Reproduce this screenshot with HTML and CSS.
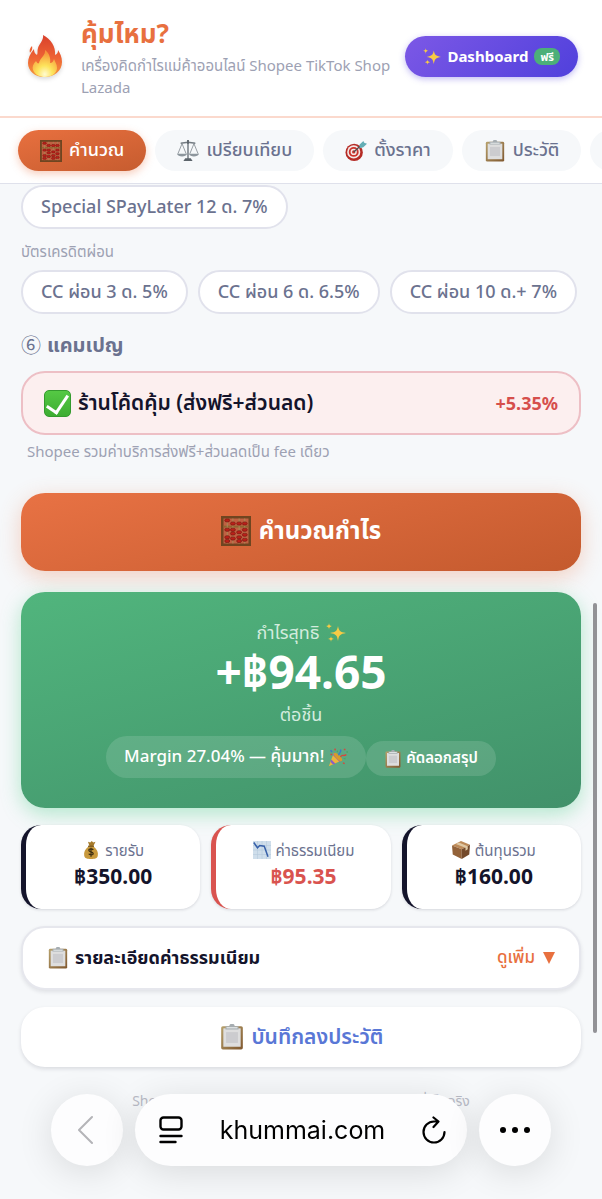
FILE: index.html
```html
<!DOCTYPE html>
<html lang="th">
<head>
    <meta charset="UTF-8">
    <meta name="viewport" content="width=device-width, initial-scale=1.0">
    <title>คุ้มไหม?</title>
    <link rel="stylesheet" href="styles.css">
</head>
<body>
    <!-- Shared icons -->
    <svg class="sprite" aria-hidden="true">
        <defs>
            <linearGradient id="flameOuter" x1="0" y1="0" x2="0" y2="1">
                <stop offset="0" stop-color="#d9402b"/>
                <stop offset=".55" stop-color="#ee6335"/>
                <stop offset="1" stop-color="#f59a3c"/>
            </linearGradient>
            <radialGradient id="flameInner" cx=".5" cy=".9" r=".8">
                <stop offset="0" stop-color="#fffbd0"/>
                <stop offset=".4" stop-color="#fde45c"/>
                <stop offset="1" stop-color="#f6953a"/>
            </radialGradient>
            <linearGradient id="board" x1="0" y1="0" x2="1" y2="1">
                <stop offset="0" stop-color="#b7a16c"/>
                <stop offset="1" stop-color="#80582f"/>
            </linearGradient>
        </defs>
        <symbol id="fire" viewBox="0 0 34 42">
            <path fill="url(#flameOuter)" d="M15 0c1 5-4 9-5 13-1 3 0 5-1 7-2-1-3-3-3-6-4 5-6 9-6 14 0 8 7 14 16 14 10 0 18-6 18-15 0-5-2-9-4-12 0 3-1 4-3 5 1-8-4-16-12-20z"/>
            <path fill="#ee6335" d="M4 11c-2 2-3 4-2 7 1-2 3-3 2-7z"/>
            <path fill="url(#flameInner)" d="M17 15c1 5-5 8-6 13-1 1-2 0-3-2-3 3-4 6-3 9 2 5 7 7 12 7 7 0 12-4 12-9 0-4-2-6-3-9-1 3-2 4-4 4 1-5-1-10-5-13z"/>
        </symbol>
        <symbol id="sparkles" viewBox="0 0 20 20">
            <path fill="#f8cb45" d="M12 4c1 5 2 6 8 7-6 1-7 2-8 8-1-6-2-7-8-8 6-1 7-2 8-7zM3 1c0 2 1 3 3 3-2 1-3 1-3 4 0-3-1-3-3-4 2 0 3-1 3-3zM5 14c0 2 1 2 3 3-2 0-3 1-3 3 0-2-1-3-3-3 2-1 3-1 3-3z"/>
        </symbol>
        <symbol id="abacus" viewBox="0 0 24 24">
            <rect x="1" y="1" width="22" height="22" fill="#c06042" stroke="#6f4520" stroke-width="2"/>
            <path stroke="#8f6630" stroke-width="1.500" d="M2 8.500h20"/>
            <path stroke="#a88955" stroke-width=".8" d="M5 2v20M9.500 2v20M14.500 2v20M19 2v20"/>
            <g fill="#ba1f19" stroke="#72150f" stroke-width=".5">
                <ellipse cx="5" cy="3.500" rx="2" ry="1.300"/><ellipse cx="9.500" cy="6" rx="2" ry="1.300"/><ellipse cx="14.500" cy="6" rx="2" ry="1.300"/><ellipse cx="19" cy="6" rx="2" ry="1.300"/>
                <ellipse cx="5" cy="11" rx="2" ry="1.300"/><ellipse cx="9.500" cy="11" rx="2" ry="1.300"/><ellipse cx="14.500" cy="13" rx="2" ry="1.300"/><ellipse cx="19" cy="11" rx="2" ry="1.300"/>
                <ellipse cx="5" cy="17" rx="2" ry="1.300"/><ellipse cx="9.500" cy="14" rx="2" ry="1.300"/><ellipse cx="14.500" cy="17" rx="2" ry="1.300"/><ellipse cx="19" cy="15" rx="2" ry="1.300"/>
                <ellipse cx="5" cy="20" rx="2" ry="1.300"/><ellipse cx="9.500" cy="18" rx="2" ry="1.300"/><ellipse cx="14.500" cy="20" rx="2" ry="1.300"/><ellipse cx="19" cy="19" rx="2" ry="1.300"/>
            </g>
        </symbol>
        <symbol id="scales" viewBox="0 0 24 24">
            <g fill="none" stroke="#737b82" stroke-width=".8">
                <path d="M5.500 4L1 15M5.500 4L10 15M18.500 4L14 15M18.500 4L23 15"/>
                <path stroke-width="1.600" d="M4 3.500c3 0 5-1 8-1s5 1 8 1M12 2v19"/>
            </g>
            <path fill="#8d969d" d="M0 15h11c-1 4-10 4-11 0zM13 15h11c-1 4-10 4-11 0z"/>
            <path fill="#5c646b" d="M9 20h6l2 3H7zM11 0h2v4h-2z"/>
        </symbol>
        <symbol id="target" viewBox="0 0 24 24">
            <circle cx="10" cy="13.500" r="9.500" fill="#b52b25"/>
            <circle cx="9.500" cy="13" r="7.200" fill="#f4e8e6"/>
            <circle cx="9.500" cy="13" r="5.400" fill="#cc342c"/>
            <circle cx="9.500" cy="13" r="3.400" fill="#f4e8e6"/>
            <circle cx="9.500" cy="13" r="1.800" fill="#cc342c"/>
            <path stroke="#4d4d52" stroke-width="1.400" d="M9.500 13l9-8"/>
            <path fill="#63aeb5" d="M16 5l4-4 1 2 3 1-4 4-4 1z"/>
        </symbol>
        <symbol id="clipboard" viewBox="0 0 24 24">
            <rect x="2" y="2" width="20" height="21.500" rx="1.500" fill="url(#board)"/>
            <rect x="4" y="4" width="16" height="17" fill="#dedede"/>
            <rect x="6.500" y="7.500" width="11" height="10" fill="#cccccf"/>
            <path fill="#a6adb1" d="M6 2h3.500c0-3 5-3 5 0H18v3H6z"/>
            <path fill="#edf0f1" d="M7 3h10v1H7z"/>
        </symbol>
        <symbol id="party" viewBox="0 0 24 24">
            <path fill="#edb53b" d="M7 7L1 23l16-7z"/>
            <path fill="#8e5fc1" d="M7 7l-1 3 8 8 3-2zM4 15l-1 3 3 3 3-1z"/>
            <ellipse cx="12" cy="12" rx="2.500" ry="6.500" fill="#d79a2c" transform="rotate(-45 12 12)"/>
            <path fill="none" stroke="#3979cc" stroke-width="1.800" d="M13 10c-1-3 4-3 2-7M3 4l2 2"/>
            <path fill="none" stroke="#d5473e" stroke-width="1.600" d="M15 12c2-4 4 0 7-3M8 2l1 2M18 19l2 1"/>
            <path fill="#d5473e" d="M19 2h2v2h-2zM3 8h2v2H3z"/>
            <path fill="#48a567" d="M18 14l3-1v2zM10 5l2-1v3zM22 5h2v2h-2z"/>
        </symbol>
        <symbol id="money" viewBox="0 0 20 24">
            <path fill="#a67a2a" d="M6 1l3 1 2-2 2 2 3-1-3 6H8z"/>
            <path fill="#c8993c" d="M7 7h6c5 4 7 8 6 13-1 3-3 4-9 4s-8-1-9-4C0 15 2 11 7 7z"/>
            <path stroke="#765319" stroke-width="1.600" d="M6 7h8"/>
            <path fill="none" stroke="#3b2d12" stroke-width="1.600" d="M13 12c-1-2-6-2-6 0 0 3 6 2 6 5 0 2-5 2-6 0M10 9v12"/>
        </symbol>
        <symbol id="chart" viewBox="0 0 24 24">
            <rect width="24" height="24" fill="#cfdeeb"/>
            <path fill="none" stroke="#b3c8db" stroke-width=".7" d="M6 0v24M12 0v24M18 0v24M0 6h24M0 12h24M0 18h24"/>
            <path fill="none" stroke="#3760a9" stroke-width="2" d="M1 2l5 7 3-3 6 1 5 14"/>
        </symbol>
        <symbol id="box" viewBox="0 0 24 24">
            <path fill="#bd8a58" d="M0 6l12-6 12 5-11 6z"/>
            <path fill="#936239" d="M0 6l13 5v13L1 18z"/>
            <path fill="#744a2b" d="M24 5l-11 6v13l10-6z"/>
            <path fill="#e0c9a5" d="M5 4l4-2 12 5v4l-3 2V9z"/>
        </symbol>
    </svg>

    <header>
        <svg class="logo"><use href="#fire"/></svg>
        <div class="brand">
            <h1>คุ้มไหม?</h1>
            <p>เครื่องคิดกำไรแม่ค้าออนไลน์ Shopee TikTok Shop Lazada</p>
        </div>
        <a href="#dashboard" class="dashboard-button">
            <svg class="icon-tiny"><use href="#sparkles"/></svg>
            Dashboard
            <span class="free">ฟรี</span>
        </a>
    </header>

    <nav>
        <button class="tab active"><svg class="icon"><use href="#abacus"/></svg>คำนวณ</button>
        <button class="tab"><svg class="icon"><use href="#scales"/></svg>เปรียบเทียบ</button>
        <button class="tab"><svg class="icon"><use href="#target"/></svg>ตั้งราคา</button>
        <button class="tab"><svg class="icon"><use href="#clipboard"/></svg>ประวัติ</button>
        <button class="tab" aria-label="สรุป"><svg class="icon"><use href="#chart"/></svg></button>
    </nav>

    <main>
        <div class="chips">
            <button class="chip">Special SPayLater 12 ด. 7%</button>
        </div>
        <p class="chip-label">บัตรเครดิตผ่อน</p>
        <div class="chips">
            <button class="chip">CC ผ่อน 3 ด. 5%</button>
            <button class="chip">CC ผ่อน 6 ด. 6.5%</button>
            <button class="chip">CC ผ่อน 10 ด.+ 7%</button>
        </div>

        <h2><span class="step">⑥</span> แคมเปญ</h2>
        <label class="campaign" for="code">
            <input type="checkbox" id="code" checked>
            <span class="campaign-name">ร้านโค้ดคุ้ม (ส่งฟรี+ส่วนลด)</span>
            <span class="campaign-fee">+5.35%</span>
        </label>
        <p class="note">Shopee รวมค่าบริการส่งฟรี+ส่วนลดเป็น fee เดียว</p>

        <button class="calculate"><svg class="icon-large"><use href="#abacus"/></svg>คำนวณกำไร</button>

        <section class="result">
            <p class="result-label">กำไรสุทธิ <svg class="icon-small"><use href="#sparkles"/></svg></p>
            <p class="profit">+฿94.65</p>
            <p class="result-label">ต่อชิ้น</p>
            <div class="result-row">
                <span class="margin">Margin 27.04% — คุ้มมาก! <svg class="icon-small"><use href="#party"/></svg></span>
                <button class="copy"><svg class="icon-tiny"><use href="#clipboard"/></svg>คัดลอกสรุป</button>
            </div>
        </section>

        <section class="stats">
            <div class="stat">
                <p><svg class="icon-tiny"><use href="#money"/></svg>รายรับ</p>
                <strong>฿350.00</strong>
            </div>
            <div class="stat fee">
                <p><svg class="icon-tiny"><use href="#chart"/></svg>ค่าธรรมเนียม</p>
                <strong>฿95.35</strong>
            </div>
            <div class="stat">
                <p><svg class="icon-tiny"><use href="#box"/></svg>ต้นทุนรวม</p>
                <strong>฿160.00</strong>
            </div>
        </section>

        <button class="details">
            <svg class="icon"><use href="#clipboard"/></svg>
            <span>รายละเอียดค่าธรรมเนียม</span>
            <span class="more">ดูเพิ่ม <i class="arrow"></i></span>
        </button>

        <button class="save"><svg class="icon-save"><use href="#clipboard"/></svg>บันทึกลงประวัติ</button>
    </main>

    <footer>Shopee TikTok Lazada ค่าธรรมเนียมอาจต่างจากที่เก็บจริง</footer>

    <!-- Browser controls -->
    <div class="scroll-thumb"></div>
    <div class="browser-bar">
        <button class="round" aria-label="Back">
            <svg width="18" height="30" viewBox="0 0 18 30" fill="none" stroke="#b4b4b8" stroke-width="2" stroke-linecap="round" stroke-linejoin="round"><path d="M14 2L1 15l13 13"/></svg>
        </button>
        <div class="address">
            <button aria-label="Page menu">
                <svg width="24" height="28" viewBox="0 0 24 28" fill="none" stroke="#000" stroke-width="2.400" stroke-linecap="round"><rect x="1.500" y="1.500" width="21" height="12" rx="3"/><path d="M1.500 20h21M1.500 26h15"/></svg>
            </button>
            <span>khummai.com</span>
            <button aria-label="Reload">
                <svg width="24" height="28" viewBox="0 0 24 28" fill="none" stroke="#000" stroke-width="2.200" stroke-linecap="round" stroke-linejoin="round"><path d="M16 5.500H12A10.500 10.500 0 1 0 22.500 16M11.500 1.500l5 4-5 5.500"/></svg>
            </button>
        </div>
        <button class="round" aria-label="More">
            <svg width="30" height="6" viewBox="0 0 30 6"><circle cx="3" cy="3" r="3"/><circle cx="15" cy="3" r="3"/><circle cx="27" cy="3" r="3"/></svg>
        </button>
    </div>
</body>
</html>
```
FILE: styles.css
```css
* {
    margin: 0;
    padding: 0;
    box-sizing: border-box;
}

body {
    min-height: 100vh;
    background-color: #f6f8fa;
    color: #14142b;
    font-family: 'Noto Sans', 'Noto Sans Thai', sans-serif;
    overflow-x: hidden;
}

button {
    border: none;
    font-family: inherit;
    color: inherit;
    cursor: pointer;
}

svg {
    flex-shrink: 0;
}

.sprite {
    position: absolute;
    width: 0;
    height: 0;
}

.icon {
    width: 22px;
    height: 22px;
}

.icon-small {
    width: 20px;
    height: 20px;
}

.icon-tiny {
    width: 18px;
    height: 18px;
}

.icon-large {
    width: 30px;
    height: 30px;
}

.icon-save {
    width: 26px;
    height: 26px;
}

header {
    display: flex;
    align-items: center;
    padding: 14px 24px 18px 28px;
    background-color: #fff;
    border-bottom: 2px solid #fbd9cd;
}

.logo {
    width: 34px;
    height: 42px;
    filter: drop-shadow(0 2px 2px rgba(0, 0, 0, 0.15));
}

.brand {
    flex: 1;
    margin-left: 19px;
}

h1 {
    font-size: 26px;
    line-height: 38px;
    padding-bottom: 2px;
    color: #e8703f;
}

.brand p {
    font-size: 15px;
    line-height: 22px;
    color: #9da1b3;
}

.dashboard-button {
    display: flex;
    align-items: center;
    gap: 6px;
    height: 41px;
    padding: 0 18px;
    border-radius: 21px;
    background: linear-gradient(135deg, #7c58e6, #5040dc);
    box-shadow: 0 2px 6px rgba(80, 64, 220, 0.35);
    color: #fff;
    font-size: 15px;
    font-weight: 700;
    text-decoration: none;
}

.free {
    padding: 0 6px;
    border-radius: 8px;
    background-color: #4caf79;
    font-size: 11px;
    line-height: 17px;
}

nav {
    display: flex;
    gap: 9px;
    padding: 12px 18px;
    background-color: #fff;
    border-bottom: 1px solid #dfe1eb;
    overflow: hidden;
}

.tab {
    display: flex;
    flex-shrink: 0;
    align-items: center;
    gap: 7px;
    height: 41px;
    padding: 0 22px;
    border-radius: 21px;
    background-color: #f6f8fa;
    color: #6b728f;
    font-size: 18px;
    font-weight: 500;
}

.tab.active {
    background: linear-gradient(165deg, #e8703f, #c65c2f);
    box-shadow: 0 3px 8px rgba(232, 112, 63, 0.35);
    color: #fff;
}

main {
    padding: 1px 21px 0;
}

.chips {
    display: flex;
    flex-wrap: wrap;
    gap: 10px;
}

.chip {
    height: 44px;
    padding: 0 18px;
    border: 2px solid #e1e2ec;
    border-radius: 22px;
    background-color: #fff;
    color: #6b728f;
    font-size: 18px;
    font-weight: 500;
}

.chip-label {
    margin: 12px 0 9px;
    font-size: 15px;
    line-height: 20px;
    color: #9da1b3;
}

h2 {
    display: flex;
    align-items: center;
    gap: 6px;
    margin: 16px 0 11px;
    font-size: 20px;
    line-height: 30px;
    font-weight: 700;
    color: #6b728f;
}

.step {
    font-family: 'Noto Sans CJK JP', sans-serif;
    font-weight: 400;
}

.campaign {
    display: flex;
    align-items: center;
    gap: 7px;
    height: 64px;
    padding: 0 21px;
    border: 2px solid #edbfc5;
    border-radius: 24px;
    background-color: #fcefef;
}

.campaign input {
    appearance: none;
    display: flex;
    justify-content: center;
    width: 27px;
    height: 27px;
    border: 1px solid #349b2e;
    border-radius: 5px;
    background: linear-gradient(#55c944, #3dad32);
}

.campaign input:checked::after {
    content: "";
    width: 10px;
    height: 19px;
    border: solid #fff;
    border-width: 0 3px 3px 0;
    transform: rotate(34deg);
}

.campaign-name {
    font-size: 21px;
    font-weight: 600;
}

.campaign-fee {
    margin-left: auto;
    color: #d64f4c;
    font-size: 18px;
    font-weight: 700;
}

.note {
    margin: 5px 6px 31px;
    font-size: 15px;
    line-height: 22px;
    color: #9da1b3;
}

.calculate {
    display: flex;
    align-items: center;
    justify-content: center;
    gap: 8px;
    width: 100%;
    height: 78px;
    padding-bottom: 2px;
    border-radius: 24px;
    background: linear-gradient(165deg, #e87244, #c45a2e);
    box-shadow: 0 6px 22px rgba(232, 112, 63, 0.3);
    color: #fff;
    font-size: 24px;
    font-weight: 700;
}

.result {
    margin-top: 21px;
    padding: 26px 20px 30px;
    border-radius: 24px;
    background: linear-gradient(165deg, #51b57d, #41916a);
    box-shadow: 0 6px 20px rgba(76, 205, 135, 0.4);
    color: #fff;
    text-align: center;
}

.result-label {
    display: flex;
    align-items: center;
    justify-content: center;
    gap: 6px;
    font-size: 18px;
    line-height: 28px;
    color: #d3ecde;
}

.profit {
    font-size: 46px;
    line-height: 50px;
    padding-bottom: 4px;
    font-weight: 700;
}

.result-row {
    display: flex;
    align-items: center;
    justify-content: center;
    margin-top: 8px;
}

.margin,
.copy {
    display: flex;
    align-items: center;
    gap: 4px;
    padding: 0 18px;
    border-radius: 21px;
    background-color: rgba(255, 255, 255, 0.13);
}

.margin {
    height: 42px;
    font-size: 17px;
    font-weight: 500;
}

.copy {
    height: 35px;
    margin-top: 3px;
    font-size: 15px;
    font-weight: 600;
}

.stats {
    display: grid;
    grid-template-columns: repeat(3, 1fr);
    gap: 11px;
    margin-top: 17px;
}

.stat {
    height: 84px;
    padding: 13px 0 0;
    border-left: 5px solid #14142b;
    border-radius: 20px;
    background-color: #fff;
    box-shadow: 0 1px 3px rgba(20, 20, 43, 0.14);
    text-align: center;
}

.stat p {
    display: flex;
    align-items: center;
    justify-content: center;
    gap: 5px;
    font-size: 15px;
    line-height: 24px;
    color: #6b728f;
}

.stat strong {
    display: block;
    font-size: 21px;
    line-height: 28px;
}

.stat.fee {
    border-color: #d9534f;
}

.stat.fee strong {
    color: #d9534f;
}

.details {
    display: flex;
    align-items: center;
    gap: 6px;
    width: 100%;
    height: 64px;
    margin-top: 17px;
    padding: 0 24px;
    border: 2px solid #e6e7ed;
    border-radius: 24px;
    background-color: #fff;
    box-shadow: 0 2px 4px rgba(20, 20, 43, 0.1);
    font-size: 18px;
    font-weight: 700;
}

.more {
    display: flex;
    align-items: center;
    gap: 8px;
    margin-left: auto;
    color: #e8703f;
    font-size: 17px;
    font-weight: 500;
}

.arrow {
    border: 6px solid transparent;
    border-top: 12px solid #e8703f;
    border-bottom: 0;
}

.save {
    display: flex;
    align-items: center;
    justify-content: center;
    gap: 7px;
    width: 100%;
    height: 60px;
    margin-top: 17px;
    border-radius: 24px;
    background-color: #fff;
    box-shadow: 0 2px 4px rgba(20, 20, 43, 0.12);
    color: #5977d6;
    font-size: 21px;
    font-weight: 600;
}

footer {
    padding: 23px 20px 0;
    color: #b9bbc6;
    font-size: 14px;
    line-height: 22px;
    text-align: center;
}

.scroll-thumb {
    position: fixed;
    top: 603px;
    right: 5px;
    width: 4px;
    height: 430px;
    border-radius: 2px;
    background-color: #929296;
}

.browser-bar {
    position: fixed;
    bottom: 0;
    left: 0;
    right: 0;
    display: flex;
    gap: 12px;
    padding: 0 51px 33px;
}

.round,
.address {
    display: flex;
    align-items: center;
    height: 72px;
    border-radius: 36px;
    background-color: #fdfdfe;
    box-shadow: 0 6px 36px rgba(0, 0, 0, 0.12);
}

.round {
    justify-content: center;
    width: 72px;
}

.address {
    flex: 1;
    justify-content: space-between;
    padding: 0 21px 0 24px;
    font-family: Inter, sans-serif;
    font-size: 25px;
    color: #000;
}

.address button {
    display: flex;
    background: none;
}
```
